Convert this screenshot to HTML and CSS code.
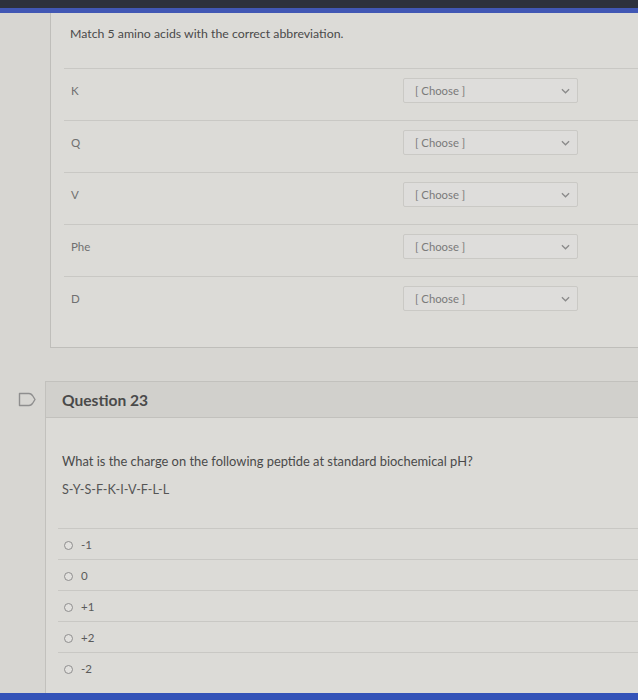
FILE: index.html
```html
<!DOCTYPE html>
<html>
<head>
<meta charset="utf-8">
<link rel="stylesheet" href="styles.css">
</head>
<body>
<div class="topbar"></div>
<div class="blueline"></div>
<main class="page">
  <section class="card match">
    <p class="prompt">Match 5 amino acids with the correct abbreviation.</p>
    <div class="rows">
      <div class="row"><span class="label">K</span><div class="select"><span>[ Choose ]</span><svg class="chev" viewBox="0 0 10 6" width="9" height="6"><path d="M1 1 L5 5 L9 1" fill="none" stroke="#8a8a8a" stroke-width="1.4"/></svg></div></div>
      <div class="row"><span class="label">Q</span><div class="select"><span>[ Choose ]</span><svg class="chev" viewBox="0 0 10 6" width="9" height="6"><path d="M1 1 L5 5 L9 1" fill="none" stroke="#8a8a8a" stroke-width="1.4"/></svg></div></div>
      <div class="row"><span class="label">V</span><div class="select"><span>[ Choose ]</span><svg class="chev" viewBox="0 0 10 6" width="9" height="6"><path d="M1 1 L5 5 L9 1" fill="none" stroke="#8a8a8a" stroke-width="1.4"/></svg></div></div>
      <div class="row"><span class="label">Phe</span><div class="select"><span>[ Choose ]</span><svg class="chev" viewBox="0 0 10 6" width="9" height="6"><path d="M1 1 L5 5 L9 1" fill="none" stroke="#8a8a8a" stroke-width="1.4"/></svg></div></div>
      <div class="row"><span class="label">D</span><div class="select"><span>[ Choose ]</span><svg class="chev" viewBox="0 0 10 6" width="9" height="6"><path d="M1 1 L5 5 L9 1" fill="none" stroke="#8a8a8a" stroke-width="1.4"/></svg></div></div>
    </div>
  </section>

  <div class="q-wrap">
    <div class="flag-col">
      <svg class="flag" viewBox="0 0 19 15" width="19" height="15"><path d="M1.5 1.5 H11 Q13 1.5 14.5 3.5 L17 7.5 L14.5 11.5 Q13 13.5 11 13.5 H1.5 Z" fill="none" stroke="#8e8e8e" stroke-width="1.4" stroke-linejoin="round"/></svg>
    </div>
    <section class="card question">
      <header class="q-head"><h2>Question 23</h2></header>
      <div class="q-body">
        <p class="q-text">What is the charge on the following peptide at standard biochemical pH?</p>
        <p class="q-text peptide">S-Y-S-F-K-I-V-F-L-L</p>
        <ul class="answers">
          <li><span class="radio"></span>-1</li>
          <li><span class="radio"></span>0</li>
          <li><span class="radio"></span>+1</li>
          <li><span class="radio"></span>+2</li>
          <li><span class="radio"></span>-2</li>
        </ul>
      </div>
    </section>
  </div>
</main>
<div class="bottombar"></div>
</body>
</html>
```

FILE: styles.css
```css
html, body {
  margin: 0;
  padding: 0;
}
body {
  width: 638px;
  height: 700px;
  overflow: hidden;
  background: #d7d6d2;
  font-family: Lato, "Open Sans", "Liberation Sans", sans-serif;
  color: #4a4a4a;
  display: flex;
  flex-direction: column;
}
.topbar {
  height: 8px;
  background: #2d313c;
}
.blueline {
  height: 5px;
  background: #4157b4;
}
.page {
  flex: 1;
  display: flex;
  flex-direction: column;
  overflow: hidden;
}
.card {
  background: #dcdbd7;
}
.match {
  margin-left: 50px;
  border-left: 1px solid #bfbeba;
  border-bottom: 1px solid #bfbeba;
}
.prompt {
  margin: 0 0 26px;
  padding: 13px 0 0 19px;
  font-size: 12.3px;
  line-height: 16px;
  color: #4a4a4a;
}
.rows {
  margin-left: 13px;
  padding-bottom: 19px;
}
.row {
  display: grid;
  grid-template-columns: 339px 175px;
  align-items: start;
  border-top: 1px solid #c9c8c4;
  padding: 9px 0 17px;
}
.label {
  padding-left: 7px;
  margin-top: 5px;
  font-size: 11.5px;
  line-height: 16px;
  color: #707070;
}
.select {
  height: 25px;
  box-sizing: border-box;
  border: 1px solid #cac9c5;
  border-radius: 2px;
  background: #dedddb;
  display: flex;
  align-items: center;
  justify-content: space-between;
  padding: 0 7px 0 11px;
  font-size: 11.3px;
  color: #7a7a7a;
}
.chev {
  display: block;
}
.q-wrap {
  margin-top: 33px;
  display: grid;
  grid-template-columns: 45px 1fr;
  flex: 1;
}
.flag-col {
  padding: 11px 0 0 18px;
}
.flag {
  display: block;
}
.question {
  border-left: 1px solid #c2c1bd;
  border-top: 1px solid #c2c1bd;
}
.q-head {
  height: 36px;
  box-sizing: border-box;
  background: #d1d0cc;
  border-bottom: 1px solid #c2c1bd;
  display: flex;
  align-items: center;
  padding-left: 16px;
}
.q-head h2 {
  margin: 0;
  font-size: 15.6px;
  font-weight: 700;
  color: #4a4a4a;
}
.q-body {
  padding: 34px 0 0 12px;
}
.q-text {
  margin: 0 0 11px;
  padding-left: 4px;
  font-size: 12.9px;
  line-height: 18px;
  color: #4a4a4a;
}
.peptide {
  margin-bottom: 29px;
  font-size: 12.6px;
  color: #555;
}
.answers {
  list-style: none;
  margin: 0;
  padding: 0;
}
.answers li {
  border-top: 1px solid #c9c8c4;
  padding: 8px 0 6px 6px;
  font-size: 11.5px;
  line-height: 16px;
  color: #5a5a5a;
  display: flex;
  align-items: center;
}
.radio {
  width: 9px;
  height: 9px;
  box-sizing: border-box;
  border: 1px solid #8f8f8f;
  border-radius: 50%;
  background: #e2e1de;
  margin-right: 8px;
}
.bottombar {
  height: 7px;
  background: #3453b8;
  flex-shrink: 0;
}
```
